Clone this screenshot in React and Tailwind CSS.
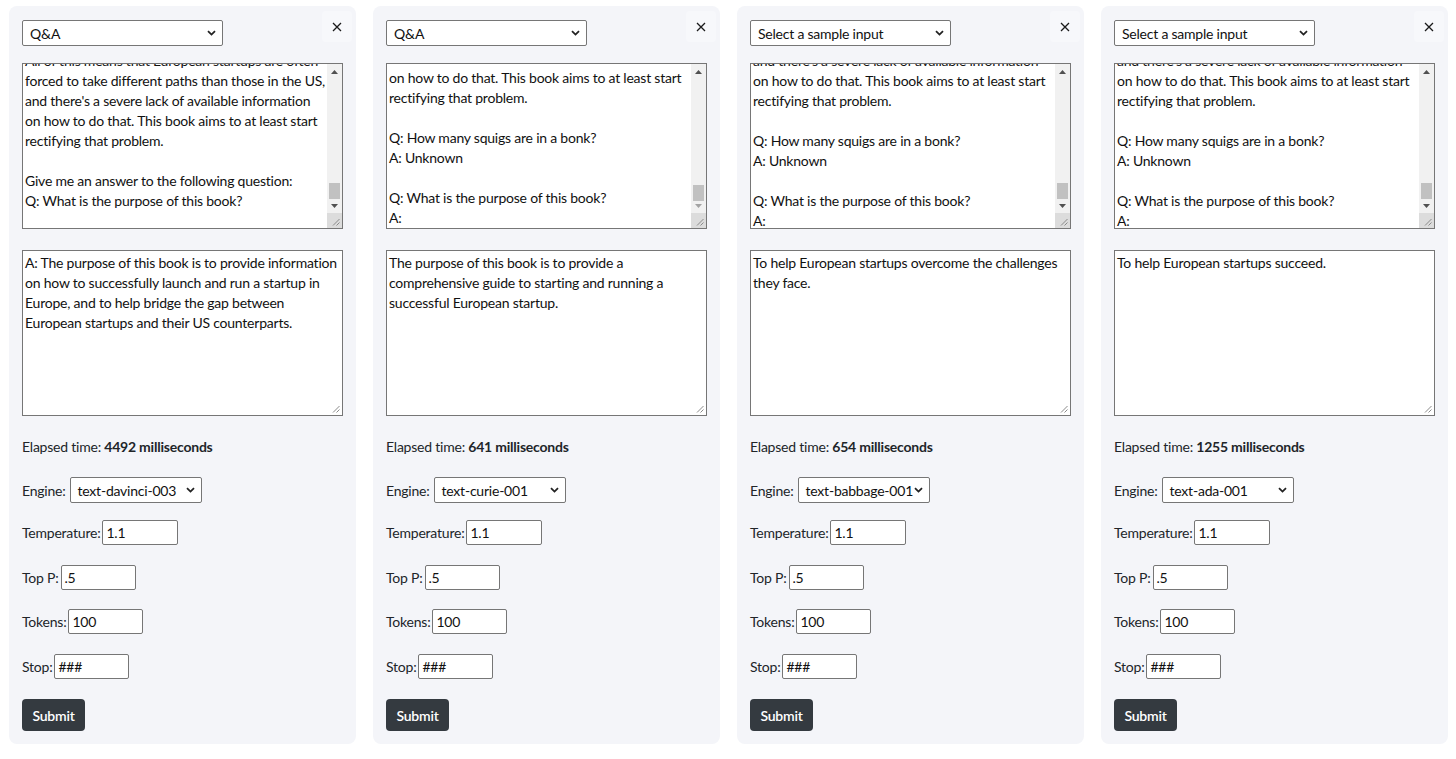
import React from "react";

const FONT = "font-['Segoe_UI',Lato,'Noto_Sans',sans-serif] tracking-[-0.22px]";

const panels = [
  {
    sample: "Q&A",
    promptTop: -13,
    prompt: [
      "All of this means that European startups are often",
      "forced to take different paths than those in the US,",
      "and there's a severe lack of available information",
      "on how to do that. This book aims to at least start",
      "rectifying that problem.",
      "",
      "Give me an answer to the following question:",
      "Q: What is the purpose of this book?",
      "",
    ],
    thumbTop: 119,
    downDisabled: false,
    answer: [
      "A: The purpose of this book is to provide information",
      "on how to successfully launch and run a startup in",
      "Europe, and to help bridge the gap between",
      "European startups and their US counterparts.",
    ],
    elapsed: "4492",
    engine: "text-davinci-003",
  },
  {
    sample: "Q&A",
    promptTop: 4,
    prompt: [
      "on how to do that. This book aims to at least start",
      "rectifying that problem.",
      "",
      "Q: How many squigs are in a bonk?",
      "A: Unknown",
      "",
      "Q: What is the purpose of this book?",
      "A:",
    ],
    thumbTop: 121,
    downDisabled: true,
    answer: [
      "The purpose of this book is to provide a",
      "comprehensive guide to starting and running a",
      "successful European startup.",
    ],
    elapsed: "641",
    engine: "text-curie-001",
  },
  {
    sample: "Select a sample input",
    promptTop: -13,
    prompt: [
      "and there's a severe lack of available information",
      "on how to do that. This book aims to at least start",
      "rectifying that problem.",
      "",
      "Q: How many squigs are in a bonk?",
      "A: Unknown",
      "",
      "Q: What is the purpose of this book?",
      "A:",
    ],
    thumbTop: 119,
    downDisabled: false,
    answer: [
      "To help European startups overcome the challenges",
      "they face.",
    ],
    elapsed: "654",
    engine: "text-babbage-001",
  },
  {
    sample: "Select a sample input",
    promptTop: -13,
    prompt: [
      "and there's a severe lack of available information",
      "on how to do that. This book aims to at least start",
      "rectifying that problem.",
      "",
      "Q: How many squigs are in a bonk?",
      "A: Unknown",
      "",
      "Q: What is the purpose of this book?",
      "A:",
    ],
    thumbTop: 119,
    downDisabled: false,
    answer: ["To help European startups succeed."],
    elapsed: "1255",
    engine: "text-ada-001",
  },
];

function Chevron() {
  return (
    <svg width="9" height="6" viewBox="0 0 9 6" className="shrink-0">
      <path d="M1 1.2 L4.5 4.6 L8 1.2" fill="none" stroke="#222" strokeWidth="1.8" />
    </svg>
  );
}

function SelectBox({ value, width }) {
  return (
    <div
      className="flex h-[26px] shrink-0 items-center justify-between rounded-[2px] border border-[#767676] bg-white pl-[7px] pr-[6px] text-[14px] text-[#111]"
      style={{ width }}
    >
      <span className="whitespace-nowrap">{value}</span>
      <Chevron />
    </div>
  );
}

function Grip() {
  return (
    <svg width="9" height="9" viewBox="0 0 9 9" className="absolute bottom-[2px] right-[2px]">
      <path d="M8.5 2 L2 8.5 M8.5 5.5 L5.5 8.5" stroke="#8a8a8a" strokeWidth="1" />
    </svg>
  );
}

function Tri({ up, color }) {
  return (
    <svg width="7" height="4" viewBox="0 0 7 4">
      {up ? <path d="M0 4 L3.5 0 L7 4 Z" fill={color} /> : <path d="M0 0 L3.5 4 L7 0 Z" fill={color} />}
    </svg>
  );
}

function PromptArea({ lines, top, thumbTop, downDisabled }) {
  return (
    <div className="relative h-[166px] overflow-hidden border border-[#767676] bg-white">
      <div className="absolute left-[2px] right-[16px] flex flex-col" style={{ top }}>
        {lines.map((l, i) => (
          <div key={i} className="h-[20px] whitespace-nowrap text-[14px] leading-[20px] text-[#111]">
            {l || "\u00a0"}
          </div>
        ))}
      </div>
      <div className="absolute right-0 top-0 bottom-0 flex w-[15px] flex-col bg-[#f1f1f1]">
        <div className="flex h-[15px] items-center justify-center">
          <Tri up color="#505050" />
        </div>
        <div className="relative flex-1">
          <div
            className="absolute left-[2px] right-[2px] h-[16px] bg-[#c1c1c1]"
            style={{ top: thumbTop - 15 }}
          />
        </div>
        <div className="flex h-[15px] items-center justify-center">
          <Tri color={downDisabled ? "#a3a3a3" : "#505050"} />
        </div>
        <div className="relative h-[15px] bg-[#dcdcdc]">
          <Grip />
        </div>
      </div>
    </div>
  );
}

function AnswerArea({ lines }) {
  return (
    <div className="relative h-[166px] overflow-hidden border border-[#767676] bg-white pl-[2px] pt-[2px]">
      {lines.map((l, i) => (
        <div key={i} className="h-[20px] whitespace-nowrap text-[14px] leading-[20px] text-[#111]">
          {l}
        </div>
      ))}
      <Grip />
    </div>
  );
}

function Field({ label, value, width, mt }) {
  return (
    <div className={`flex items-center ${mt} text-[14px] text-[#212529]`}>
      <span className="mr-[2px] whitespace-nowrap">{label}</span>
      <div
        className="flex h-[25px] items-center rounded-[2px] border border-[#767676] bg-white pl-[3px] text-[14px] text-[#111]"
        style={{ width }}
      >
        {value}
      </div>
    </div>
  );
}

function Card({ p }) {
  return (
    <div className="flex h-[738px] w-[347px] shrink-0 flex-col rounded-[8px] bg-[#f4f5f9] px-[13px] pt-[14px]">
      <div className="flex h-[26px] items-start justify-between">
        <SelectBox value={p.sample} width={201} />
        <div className="-mr-[9px] -mt-[9px] flex h-[31px] w-[30px] items-center justify-center rounded-[4px] bg-[#f7f8fb]">
          <svg width="10" height="10" viewBox="0 0 10 10">
            <path d="M1 1 L9 9 M9 1 L1 9" stroke="#1a1a1a" strokeWidth="1.3" />
          </svg>
        </div>
      </div>
      <div className="mt-[17px]">
        <PromptArea lines={p.prompt} top={p.promptTop} thumbTop={p.thumbTop} downDisabled={p.downDisabled} />
      </div>
      <div className="mt-[21px]">
        <AnswerArea lines={p.answer} />
      </div>
      <div className="mt-[21px] h-[20px] text-[14px] leading-[20px] text-[#212529]">
        Elapsed time: <span className="font-bold">{p.elapsed} milliseconds</span>
      </div>
      <div className="mt-[20px] flex items-center text-[14px] text-[#212529]">
        <span className="mr-[4px] whitespace-nowrap">Engine:</span>
        <SelectBox value={p.engine} width={132} />
      </div>
      <Field label="Temperature:" value="1.1" width={76} mt="mt-[17px]" />
      <Field label="Top P:" value=".5" width={75} mt="mt-[20px]" />
      <Field label="Tokens:" value="100" width={75} mt="mt-[19px]" />
      <Field label="Stop:" value="###" width={75} mt="mt-[20px]" />
      <div className="mt-[20px]">
        <div className="flex h-[32px] w-[63px] items-center justify-center rounded-[4px] bg-[#343a40] text-[14px] font-semibold text-white">
          Submit
        </div>
      </div>
    </div>
  );
}

export default function App() {
  return (
    <div className={`flex min-h-[759px] w-[1456px] gap-[17px] bg-white pl-[9px] pt-[6px] ${FONT}`}>
      {panels.map((p, i) => (
        <Card key={i} p={p} />
      ))}
    </div>
  );
}
